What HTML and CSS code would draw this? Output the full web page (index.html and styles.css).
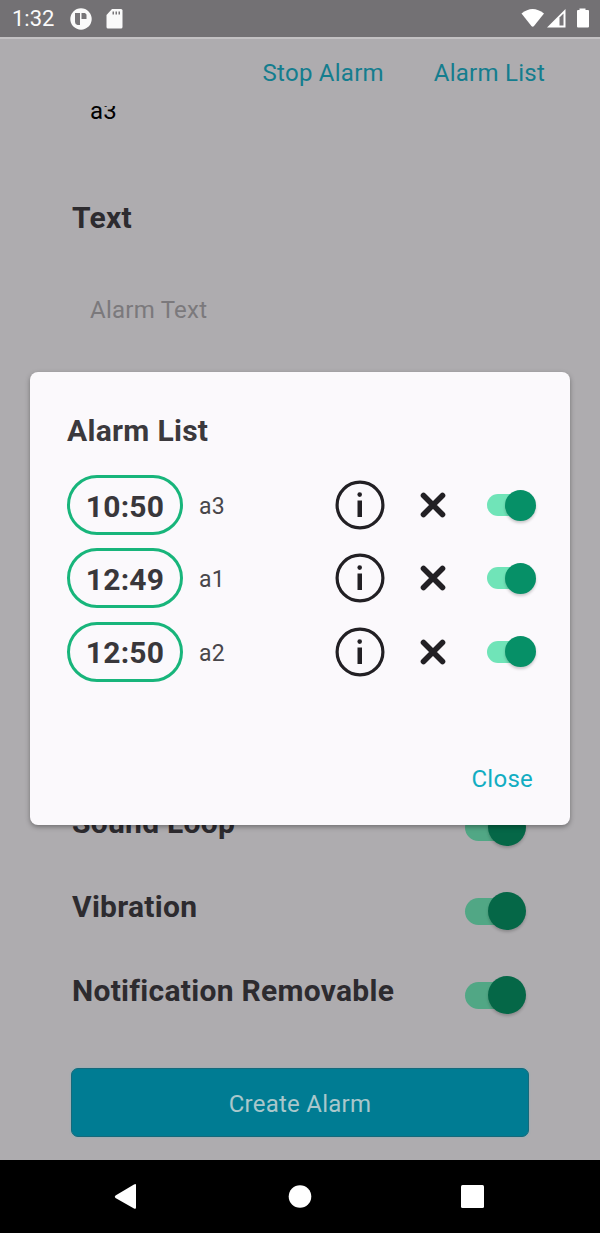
FILE: index.html
```html
<!DOCTYPE html>
<html lang="en">
<head>
<meta charset="utf-8">
<title>Alarm List</title>
<link rel="stylesheet" href="styles.css">
</head>
<body>
<div class="screen">
  <header class="status">
    <span class="clock">1:32</span>
    <svg class="app-icon" width="22" height="22" viewBox="0 0 22 22"><circle cx="11" cy="11" r="10.700" fill="#fafafa"/><path d="M5 5h5v12H7.500Q5 16.500 5 14zM11.500 5H15l1.500 1.500v4.500h-5z" fill="#777578"/></svg>
    <svg class="sd-icon" width="17" height="20" viewBox="0 0 17 20"><path d="M6 0h9q1.500 0 1.500 1.500v16.500q0 1.500-1.500 1.500H2q-1.500 0-1.500-1.500V6z" fill="#fafafa"/><path d="M6.500 2.500h1.500v3H6.500zm3 0H11v3H9.500zm3 0H14v3h-1.500z" fill="#777578"/></svg>
    <svg class="signal-icons" width="70" height="22" viewBox="0 0 70 22"><path d="M.5 5.500Q11.500-3.500 23 5.500L13 18q-1.300 1.300-2.600 0z" fill="#fff"/><path d="M44.500 1v18.500H26z" fill="#fff"/><path d="M38.500 9.500 42.500 5.500v12h-4z" fill="#777578"/><path d="M58.500.5h6V2H67q1 0 1 1v15.500q0 1-1 1H57q-1 0-1-1V3q0-1 1-1h1.500z" fill="#fff"/></svg>
  </header>
  <nav class="toolbar"><span>Stop Alarm</span><span>Alarm List</span></nav>
  <main class="form">
    <div class="value">a3</div>
    <h2 class="label label-text">Text</h2>
    <div class="placeholder">Alarm Text</div>
    <div class="options">
      <div class="option"><span class="label">Sound Loop</span><span class="switch"></span></div>
      <div class="option"><span class="label">Vibration</span><span class="switch"></span></div>
      <div class="option"><span class="label">Notification Removable</span><span class="switch"></span></div>
    </div>
    <div class="create">Create Alarm</div>
  </main>
  <footer class="navbar">
    <svg width="600" height="73" viewBox="0 0 600 73"><path d="M136 25v22.500q0 2-2 1L115.500 38q-1.500-1.300 0-2.500L134 24.500q2-1.200 2 .5z" fill="#fff"/><circle cx="300" cy="36.500" r="11.300" fill="#fff"/><rect x="461" y="25" width="23" height="23" rx="1.500" fill="#fff"/></svg>
  </footer>

  <section class="dialog">
    <h1 class="dialog-title">Alarm List</h1>
    <div class="alarms">
      <div class="alarm">
        <span class="time">10:50</span><span class="name">a3</span>
        <svg class="info" width="50" height="50" viewBox="0 0 50 50"><circle cx="25" cy="25" r="22.900" fill="none" stroke="#222024" stroke-width="3.200"/><circle cx="24.700" cy="14.600" r="2.300" fill="#222024"/><path d="M22.500 20.500h4.500V37h-4.500z" fill="#222024"/></svg>
        <svg class="remove" width="26" height="26" viewBox="0 0 26 26"><path d="M3.500 3.500l19 19M22.500 3.500l-19 19" stroke="#222024" stroke-width="5.600" stroke-linecap="round"/></svg>
        <span class="switch switch-small"></span>
      </div>
      <div class="alarm">
        <span class="time">12:49</span><span class="name">a1</span>
        <svg class="info" width="50" height="50" viewBox="0 0 50 50"><circle cx="25" cy="25" r="22.900" fill="none" stroke="#222024" stroke-width="3.200"/><circle cx="24.700" cy="14.600" r="2.300" fill="#222024"/><path d="M22.500 20.500h4.500V37h-4.500z" fill="#222024"/></svg>
        <svg class="remove" width="26" height="26" viewBox="0 0 26 26"><path d="M3.500 3.500l19 19M22.500 3.500l-19 19" stroke="#222024" stroke-width="5.600" stroke-linecap="round"/></svg>
        <span class="switch switch-small"></span>
      </div>
      <div class="alarm">
        <span class="time">12:50</span><span class="name">a2</span>
        <svg class="info" width="50" height="50" viewBox="0 0 50 50"><circle cx="25" cy="25" r="22.900" fill="none" stroke="#222024" stroke-width="3.200"/><circle cx="24.700" cy="14.600" r="2.300" fill="#222024"/><path d="M22.500 20.500h4.500V37h-4.500z" fill="#222024"/></svg>
        <svg class="remove" width="26" height="26" viewBox="0 0 26 26"><path d="M3.500 3.500l19 19M22.500 3.500l-19 19" stroke="#222024" stroke-width="5.600" stroke-linecap="round"/></svg>
        <span class="switch switch-small"></span>
      </div>
    </div>
    <div class="close">Close</div>
  </section>
</div>
</body>
</html>
```

FILE: styles.css
```css
* { box-sizing: border-box; }

body {
  margin: 0;
  font-family: Roboto, sans-serif;
  font-size: 24px;
  line-height: 28px;
  letter-spacing: 0.25px;
}

h1, h2 { margin: 0; }
svg { display: block; flex: none; }

.screen {
  position: relative;
  display: flex;
  flex-direction: column;
  width: 600px;
  height: 1233px;
  overflow: hidden;
  background: #aeacaf;
}

.status {
  display: flex;
  align-items: center;
  height: 39px;
  padding: 0 9px 0 12px;
  background: #737174;
  border-bottom: 2px solid #c3c1c3;
}

.clock {
  width: 58px;
  padding-top: 1px;
  color: #fafafa;
  font-size: 22px;
  letter-spacing: 0;
}

.sd-icon { margin-left: 14px; }
.signal-icons { margin-left: auto; }

.toolbar {
  display: flex;
  justify-content: flex-end;
  gap: 50px;
  height: 67px;
  padding: 20px 55px 0 0;
  color: #147d8e;
}

.form {
  flex: 1;
  min-height: 0;
  overflow: hidden;
  padding: 0 71px;
}

.value {
  margin-top: -9px;
  padding-left: 19px;
  color: #000;
}

.label {
  padding-left: 1px;
  color: #2d2b2f;
  font-size: 30px;
  font-weight: 700;
  line-height: 36px;
  letter-spacing: 0.28px;
}

.label-text { margin-top: 75px; }

.placeholder {
  margin-top: 60px;
  padding-left: 19px;
  color: #7b797c;
}

.options { margin-top: 461px; }

.option {
  display: flex;
  align-items: center;
  justify-content: space-between;
  height: 84px;
  padding-right: 3px;
}

.option .label { margin-top: -8px; }

.switch {
  display: flex;
  align-items: center;
  width: 61px;
  height: 38px;
}

.switch::before {
  content: "";
  flex: 1;
  height: 27px;
  margin-right: -19px;
  border-radius: 14px 0 0 14px;
  background: #51a785;
}

.switch::after {
  content: "";
  position: relative;
  width: 38px;
  height: 38px;
  border-radius: 50%;
  background: #056747;
  box-shadow: 0 2px 3px rgba(0, 0, 0, 0.2);
}

.create {
  display: flex;
  align-items: center;
  justify-content: center;
  height: 69px;
  margin-top: 31px;
  padding-top: 2px;
  border: 1px solid #17697a;
  border-radius: 7px;
  background: #007c93;
  box-shadow: 0 0 2px #7fb4bd;
  color: #a9c7cb;
}

.navbar {
  height: 73px;
  background: #000;
}

/* Dialog above the form */
.dialog {
  position: absolute;
  left: 30px;
  top: 372px;
  display: flex;
  flex-direction: column;
  width: 540px;
  height: 453px;
  padding: 41px 35px 0 37px;
  border-radius: 8px;
  background: #fbf9fc;
  box-shadow: 0 2px 5px rgba(0, 0, 0, 0.35);
}

.dialog-title {
  color: #3b393d;
  font-size: 30px;
  line-height: 36px;
  letter-spacing: 0.3px;
}

.alarms {
  display: grid;
  grid-auto-rows: 60px;
  row-gap: 13.400px;
  margin-top: 26px;
}

.alarm {
  display: grid;
  grid-template-columns: 116px 152px 50px 61px 1fr;
  align-items: center;
}

.time {
  display: flex;
  align-items: center;
  justify-content: center;
  height: 60px;
  padding-top: 3px;
  border: 3px solid #18b57b;
  border-radius: 30px;
  color: #39373b;
  font-size: 30px;
  font-weight: 700;
}

.name {
  padding: 4px 0 0 16px;
  color: #48464a;
  font-size: 23px;
}

.remove { justify-self: end; }

.switch-small {
  justify-self: end;
  width: 49px;
  height: 30px;
  margin-right: -1px;
}

.switch-small::before {
  height: 22px;
  margin-right: -15px;
  background: #70e4b8;
}

.switch-small::after {
  width: 31px;
  height: 31px;
  background: #069067;
}

.close {
  margin: 83px 2px 0 0;
  text-align: right;
  color: #12adc2;
}
```
